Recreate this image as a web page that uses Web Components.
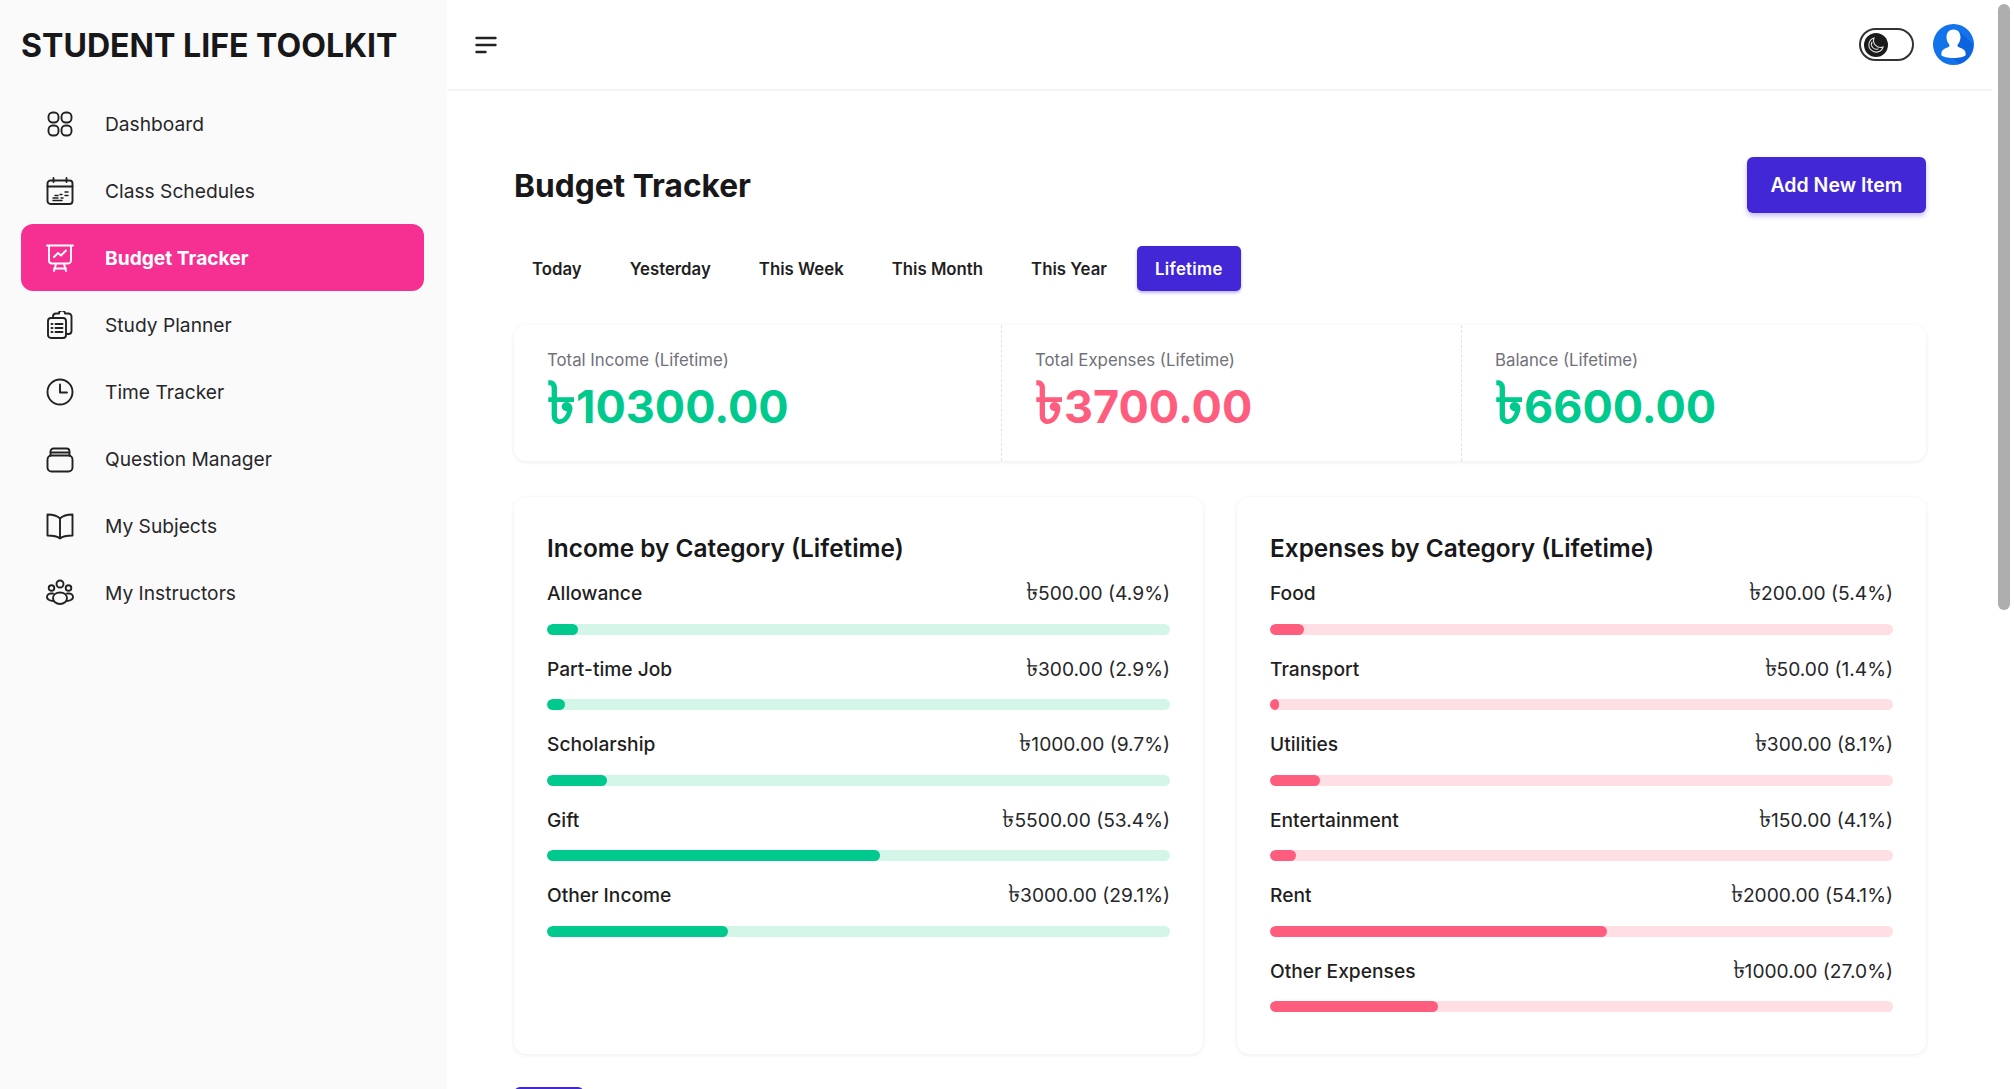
<!DOCTYPE html>
<html><head><meta charset="utf-8"><title>Budget Tracker</title>
<style>
html,body{margin:0;height:100%;overflow:hidden;background:#fff;font-family:Inter,"Noto Sans","DejaVu Sans",sans-serif;color:#18181b}
</style></head><body>
<app-shell></app-shell>
<script>
const S='fill="none" stroke="currentColor" stroke-width="1.9" stroke-linecap="round" stroke-linejoin="round"';
const ICONS={
dash:`<rect x="2.500" y="2.500" width="10" height="10" rx="4.200"/><rect x="15.500" y="2.500" width="10" height="10" rx="4.200"/><rect x="2.500" y="15.500" width="10" height="10" rx="4.200"/><rect x="15.500" y="15.500" width="10" height="10" rx="4.200"/>`,
cal:`<rect x="1.500" y="3.500" width="25" height="23.500" rx="3"/><path d="M1.500 9.500h25M7.500 1v4M20.500 1v4"/><path d="M7 21h5M9 18.500h3M14 17.500h2M15 21h2M19 15h3M19 18.500h3M7 23.500h9" stroke-width="1.500"/>`,
chart:`<path d="M1 1.500h26M3 1.500v15a3 3 0 0 0 3 3h16a3 3 0 0 0 3-3v-15M10 20l-2 7M18 20l2 7M8 24.500h12"/><path d="M8 13l4-4 3 2.500 5-5"/>`,
plan:`<rect x="2" y="7" width="18" height="20" rx="3"/><path d="M20 23h2.500a3 3 0 0 0 3-3V5.500a3 3 0 0 0-3-3H19a3 3 0 0 0-6 0H10a3 3 0 0 0-3 3V7"/><path d="M9.500 13h7M9.500 17h7M9.500 21h7M5.500 13h1M5.500 17h1M5.500 21h1"/>`,
clock:`<circle cx="14" cy="14" r="12.500"/><path d="M14 6.500V14.500H21"/>`,
box:`<rect x="1.500" y="10.500" width="25" height="16" rx="4"/><path d="M4.500 10.500V6.500a3 3 0 0 1 3-3h13a3 3 0 0 1 3 3v4M4.500 7.500h19"/>`,
book:`<path d="M14 6.500C11 3.500 6 2.500 1.500 2.500V23.500C6 23.500 11 24 14 26.500C17 24 22 23.500 26.500 23.500V2.500C22 2.500 17 3.500 14 6.500ZM14 6.500V26.500"/>`,
people:`<circle cx="14" cy="5" r="3.500"/><circle cx="5.500" cy="9" r="2.800"/><circle cx="22.500" cy="9" r="2.800"/><path d="M7 19c0-3.500 3-5.500 7-5.500s7 2 7 5.500-3 6-7 6-7-2.500-7-6Z"/><path d="M7 14.500H4.500C2.500 14.500 1 16.500 1 18s1.500 3.500 6 4M21 14.500h2.500c2 0 3.500 2 3.500 3.500s-1.500 3.500-6 4"/>`};
const tpl=(html)=>{const t=document.createElement('template');t.innerHTML=html;return t};
class Base extends HTMLElement{connectedCallback(){if(this.shadowRoot)return;const r=this.attachShadow({mode:'open'});r.appendChild(this.constructor.t.content.cloneNode(true));this.init&&this.init(r)}}

class NavItem extends Base{
 static t=tpl(`<style>:host{display:flex;align-items:center;height:67.100px;padding-left:25px;gap:31px;border-radius:12px;font-size:19.200px;color:#27272a}
 :host([active]){background:#f62f93;color:#fff;font-weight:700}svg{width:28px;height:28px;flex:none;color:#222}:host([active]) svg{color:#fff}</style><svg viewBox="0 0 28 28" ${S}></svg><slot></slot>`);
 init(r){r.querySelector('svg').innerHTML=ICONS[this.getAttribute('icon')]}
}
class SideBar extends Base{
 static t=tpl(`<style>:host{display:block;width:447px;height:100%;flex:none;background:#fafafa;padding:0 23px 0 21px;box-sizing:border-box}
 h1{margin:0;font-size:32.100px;line-height:44px;font-weight:700;padding-top:24px;height:90px;box-sizing:border-box;color:#18181b;white-space:nowrap}
 nav{display:flex;flex-direction:column}</style><h1>STUDENT LIFE TOOLKIT</h1><nav><slot></slot></nav>`);
}
class TopBar extends Base{
 static t=tpl(`<style>:host{display:flex;align-items:center;justify-content:space-between;height:89px;flex:none;padding:0 19px 0 28px;background:#fff;box-shadow:0 1px 3px rgba(0,0,0,.09);position:relative}
 .r{display:flex;align-items:center;gap:19px}
 .tg{width:48px;height:29px;border:2px solid #333;border-radius:17px;display:flex;align-items:center;padding-left:3px;background:#fff;box-sizing:content-box}
 .k{width:24px;height:24px;border-radius:50%;background:#1b1b1b;display:flex;align-items:center;justify-content:center;flex:none}
 .av{width:41px;height:41px;display:block}</style>
 <svg width="22" height="18" viewBox="0 0 22 18" fill="none" stroke="#222" stroke-width="2.400" stroke-linecap="round"><path d="M1.500 2h19M1.500 9h19M1.500 16h9"/></svg>
 <div class="r"><div class="tg"><div class="k"><svg width="20" height="20" viewBox="0 0 20 20" fill="none" stroke="#ddd" stroke-width="1.100" stroke-linecap="round"><path d="M8 3a7.200 7.200 0 1 0 9 9 7 7 0 0 1-9-9Z"/><path d="M6 7a5 5 0 0 0 6 7"/></svg></div></div>
 <svg class="av" viewBox="0 0 41 41"><circle cx="20.500" cy="20.500" r="20.500" fill="#1273eb"/><path d="M27 8L40 20A20.500 20.500 0 0 1 26 40L20 34Z" fill="#0d62de"/><path d="M20.500 5.500c4.200 0 7 3 7 7.500 0 3.200-1.300 6-2.800 7.500-.5 1.300 0 2.300 1.800 3 3.800 1.400 5.800 2.700 6 5l.2 2.500c-1.200 1.800-6.500 3-12.200 3s-11-1.200-12.200-3l.2-2.500c.2-2.300 2.200-3.600 6-5 1.800-.7 2.300-1.700 1.800-3-1.500-1.500-2.800-4.300-2.800-7.500 0-4.500 2.800-7.500 7-7.500Z" fill="#fff"/></svg></div>`);
}
class Tab extends Base{
 static t=tpl(`<style>:host{display:flex;align-items:center;height:45px;padding:0 18px;font-size:16.800px;font-weight:600;border-radius:5px;color:#1f1f23;box-sizing:border-box}
 :host([active]){background:#4127d6;color:#fff;box-shadow:0 2px 3px rgba(65,39,214,.35);letter-spacing:.3px}</style><slot></slot>`);
}
class StatCell extends Base{
 static t=tpl(`<style>:host{display:block;padding:23px 33px 0;box-sizing:border-box;border-left:1px dashed #e2e2e6;height:136px;min-width:0}
 :host([first]){border-left:0}.l{font-size:16.800px;color:#71717a;line-height:24px}
 .v{font-size:45px;font-weight:700;line-height:56px;margin-top:7px;color:var(--c)}
 ::slotted(.t){font-size:58px;line-height:0}</style><div class="l"><slot name="l"></slot></div><div class="v"><slot></slot></div>`);
}
class BarRow extends Base{
 static t=tpl(`<style>:host{display:block;height:75.600px}
 .h{display:flex;justify-content:space-between;font-size:19.200px;line-height:28px;color:#27272a;height:28px}
 .n{font-weight:500;color:#1f1f23}.c{font-size:1.300em;line-height:0}
 .tr{height:11px;border-radius:6px;margin-top:16.500px;background:var(--tr);overflow:hidden}
 .f{height:100%;border-radius:6px;background:var(--fc);min-width:7px}</style>
 <div class="h"><span class="n"></span><span><span class="c">৳</span><span class="a"></span></span></div><div class="tr"><div class="f"></div></div>`);
 init(r){r.querySelector('.n').textContent=this.getAttribute('name');r.querySelector('.a').textContent=this.getAttribute('amt');r.querySelector('.f').style.width=this.getAttribute('pct')+'%'}
}
class CatCard extends Base{
 static t=tpl(`<style>:host{display:block;background:#fff;border-radius:12px;padding:34px 33px 0;box-sizing:border-box;height:557px;box-shadow:0 1px 4px rgba(0,0,0,.08)}
 h2{margin:0 0 14px;font-size:24.400px;font-weight:600;line-height:34px;color:#18181b}</style><h2><slot name="t"></slot></h2><slot></slot>`);
}
class AppShell extends Base{
 static t=tpl(`<style>:host{display:flex;height:100vh;overflow:hidden;position:relative}
 .main{flex:1;min-width:0;display:flex;flex-direction:column;margin-right:21px;overflow:hidden}
 .c{padding:68px 67px 0;flex:1;overflow:hidden}
 .hd{display:flex;justify-content:space-between;align-items:center;height:56px}
 .hd h2{margin:0;font-size:31.700px;font-weight:700;color:#18181b}
 .btn{background:#4127d6;color:#fff;font-size:19.500px;font-weight:600;height:56px;display:flex;align-items:center;padding:0 23.600px;border-radius:6px;box-shadow:0 3px 5px rgba(65,39,214,.3)}
 .tabs{display:flex;gap:12px;margin-top:33px}
 .st{display:grid;grid-template-columns:487px 460px 1fr;margin-top:34px;border-radius:12px;box-shadow:0 1px 4px rgba(0,0,0,.08)}
 .gr{display:grid;grid-template-columns:1fr 1fr;gap:34px;margin-top:36px}
 .more{width:70px;height:34px;background:#4127d6;border-radius:6px;margin-top:33px}
 .sb{position:absolute;right:4px;top:4px;width:12px;height:606px;border-radius:6px;background:#aeaeae}
 </style>
 <side-bar>
  <nav-item icon="dash">Dashboard</nav-item><nav-item icon="cal">Class Schedules</nav-item><nav-item icon="chart" active>Budget Tracker</nav-item><nav-item icon="plan">Study Planner</nav-item><nav-item icon="clock">Time Tracker</nav-item><nav-item icon="box">Question Manager</nav-item><nav-item icon="book">My Subjects</nav-item><nav-item icon="people">My Instructors</nav-item>
 </side-bar>
 <div class="main"><top-bar></top-bar><div class="c">
  <div class="hd"><h2>Budget Tracker</h2><div class="btn">Add New Item</div></div>
  <div class="tabs"><tab-item>Today</tab-item><tab-item>Yesterday</tab-item><tab-item>This Week</tab-item><tab-item>This Month</tab-item><tab-item>This Year</tab-item><tab-item active>Lifetime</tab-item></div>
  <div class="st">
   <stat-cell first style="--c:#00c98d"><span slot="l">Total Income (Lifetime)</span><span class="t">৳</span>10300.00</stat-cell>
   <stat-cell style="--c:#ff5d7e"><span slot="l">Total Expenses (Lifetime)</span><span class="t">৳</span>3700.00</stat-cell>
   <stat-cell style="--c:#00c98d"><span slot="l">Balance (Lifetime)</span><span class="t">৳</span>6600.00</stat-cell>
  </div>
  <div class="gr">
   <cat-card style="--tr:#d4f6e9;--fc:#00c98d"><span slot="t">Income by Category (Lifetime)</span>
    <bar-row name="Allowance" amt="500.00 (4.9%)" pct="4.9"></bar-row>
    <bar-row name="Part-time Job" amt="300.00 (2.9%)" pct="2.9"></bar-row>
    <bar-row name="Scholarship" amt="1000.00 (9.7%)" pct="9.7"></bar-row>
    <bar-row name="Gift" amt="5500.00 (53.4%)" pct="53.4"></bar-row>
    <bar-row name="Other Income" amt="3000.00 (29.1%)" pct="29.1"></bar-row>
   </cat-card>
   <cat-card style="--tr:#ffdfe4;--fc:#ff5d7e"><span slot="t">Expenses by Category (Lifetime)</span>
    <bar-row name="Food" amt="200.00 (5.4%)" pct="5.4"></bar-row>
    <bar-row name="Transport" amt="50.00 (1.4%)" pct="1.4"></bar-row>
    <bar-row name="Utilities" amt="300.00 (8.1%)" pct="8.1"></bar-row>
    <bar-row name="Entertainment" amt="150.00 (4.1%)" pct="4.1"></bar-row>
    <bar-row name="Rent" amt="2000.00 (54.1%)" pct="54.1"></bar-row>
    <bar-row name="Other Expenses" amt="1000.00 (27.0%)" pct="27"></bar-row>
   </cat-card>
  </div>
  <div class="more"></div>
 </div></div><div class="sb"></div>`);
}
customElements.define('nav-item',NavItem);customElements.define('side-bar',SideBar);customElements.define('top-bar',TopBar);customElements.define('tab-item',Tab);customElements.define('stat-cell',StatCell);customElements.define('bar-row',BarRow);customElements.define('cat-card',CatCard);customElements.define('app-shell',AppShell);
</script></body></html>
